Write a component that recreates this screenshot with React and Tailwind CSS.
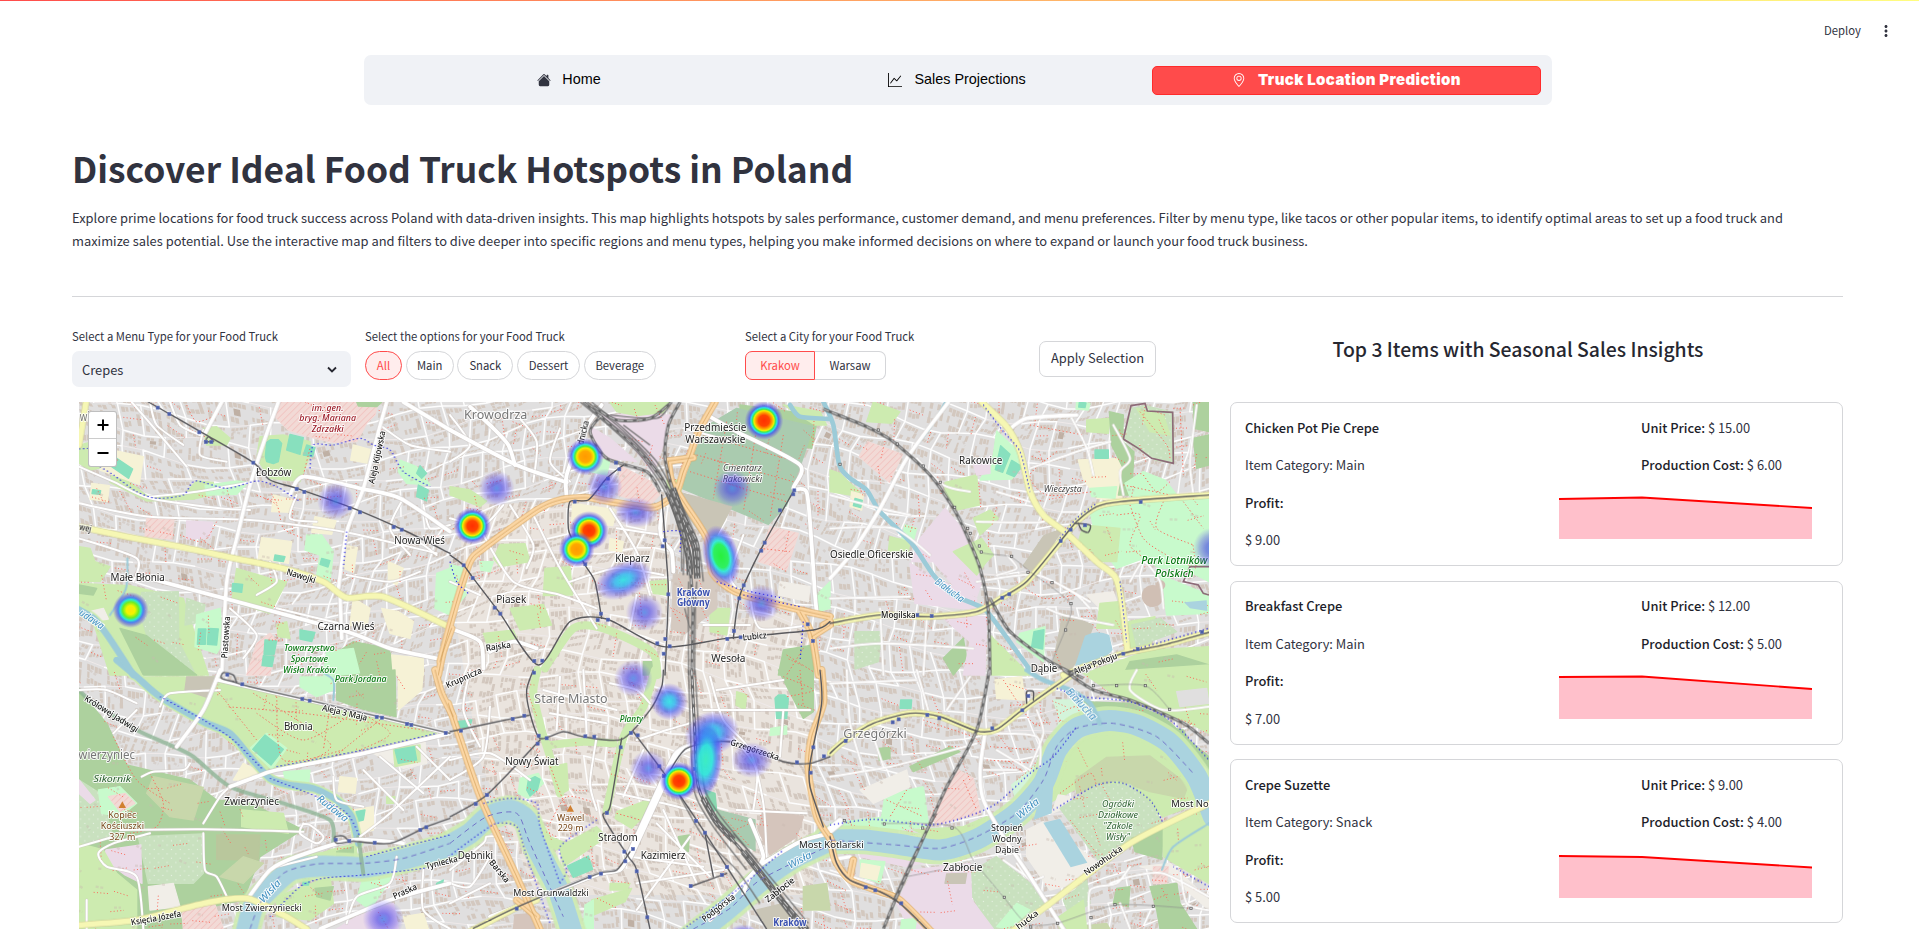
import React from "react";
import { BsHouseFill, BsGraphUp, BsGeoAlt } from "react-icons/bs";
import { MdMoreVert } from "react-icons/md";

/* ------------------------------------------------------------------ */
/* Map: drawn on a 3390 x 1581 canvas, split in six tiles (3 x 2)      */
/* ------------------------------------------------------------------ */

const OFFSET = { A: [0, 0], B: [1140, 0], C: [2280, 0], D: [0, 825], E: [1140, 825], F: [2280, 825] };

function curve(str) {
  const p = str.split(" ").map((s) => s.split(",").map(Number));
  let d = `M${p[0][0]} ${p[0][1]}`;
  for (let i = 0; i < p.length - 1; i++) {
    const a = p[Math.max(0, i - 1)];
    const b = p[i];
    const c = p[i + 1];
    const e = p[Math.min(p.length - 1, i + 2)];
    const k = 8;
    d += `C${b[0] + (c[0] - a[0]) / k} ${b[1] + (c[1] - a[1]) / k} ${c[0] - (e[0] - b[0]) / k} ${c[1] - (e[1] - b[1]) / k} ${c[0]} ${c[1]}`;
  }
  return d;
}

function Lines({ data, width, color, dash, cap = "round", opacity = 1 }) {
  return (
    <g fill="none" stroke={color} strokeWidth={width} strokeDasharray={dash} strokeLinecap={cap} strokeLinejoin="round" opacity={opacity}>
      {Object.entries(data).map(([tile, list]) => (
        <g key={tile} transform={`translate(${OFFSET[tile].join(" ")})`}>
          {list.map((s, i) => (
            <path key={i} d={curve(s)} />
          ))}
        </g>
      ))}
    </g>
  );
}

function rng(seed) {
  let s = seed;
  return () => {
    s = (s * 1664525 + 1013904223) % 4294967296;
    return s / 4294967296;
  };
}

function buildCity() {
  const r = rng(11);
  const S = 62;
  const node = (i, j) => {
    const x = i * S;
    const y = j * S;
    return [
      x + Math.sin(y / 330 + x / 900) * 75 + Math.sin(i * 12.9 + j * 7.7) * 13,
      y + Math.sin(x / 390 + y / 1100) * 95 + Math.cos(i * 5.3 + j * 9.1) * 13,
    ];
  };
  let streets = "";
  let lanes = "";
  let houses = "";
  let dark = "";
  let paths = "";
  let crumbs = "";
  for (let i = -3; i < 60; i++) {
    for (let j = -4; j < 30; j++) {
      const a = node(i, j);
      const b = node(i + 1, j);
      const c = node(i, j + 1);
      const f = (n) => n.toFixed(0);
      const seg = (p, q) => `M${f(p[0])} ${f(p[1])}L${f(q[0])} ${f(q[1])}`;
      if (r() < 0.68) streets += seg(a, b);
      else lanes += seg(a, b);
      if (r() < 0.6) streets += seg(a, c);
      const u = [(b[0] - a[0]) / S, (b[1] - a[1]) / S];
      const v = [(c[0] - a[0]) / S, (c[1] - a[1]) / S];
      const at = (x, y) => [a[0] + u[0] * x + v[0] * y, a[1] + u[1] * x + v[1] * y];
      const quad = (x, y, w, h) => {
        const q = [at(x, y), at(x + w, y), at(x + w, y + h), at(x, y + h)];
        return "M" + q.map((k) => `${k[0].toFixed(1)} ${k[1].toFixed(1)}`).join("L") + "Z";
      };
      for (let n = 0; n < 4; n++) {
        const w = 6 + r() * 14;
        if (r() < 0.85) houses += quad(7 + n * 12, 7, Math.min(w, 10), 8 + r() * 7);
        if (r() < 0.85) houses += quad(7 + n * 12, 42 - r() * 6, Math.min(w, 10), 12);
      }
      if (r() < 0.5) houses += quad(8, 24, 7, 14);
      if (r() < 0.5) houses += quad(44, 22, 9, 16);
      if (r() < 0.04) dark += quad(18, 20, 18, 14);
      if (r() < 0.26) paths += seg(at(8, 32), at(54, 30 + r() * 20));
      if (r() < 0.18) paths += seg(at(30, 6), at(32 + r() * 20, 56));
      if (r() < 0.35) crumbs += seg(at(10 + r() * 20, 20), at(40, 22 + r() * 10));
    }
  }
  return { streets, lanes, houses, dark, paths, crumbs };
}
const CITY = buildCity();

const PARK = "#c8facc";
const GRASS = "#cdebb0";
const WOOD = "#add19e";
const CEM = "#aacbaf";
const ALLOT = "#c9e1bf";
const PITCH = "#88e0be";
const IND = "#ebdbe8";
const SCHOOL = "#f6f2d6";
const PINK = "#f2dad6";
const SCRUB = "#c8d7ab";
const BROWN = "#c9c5b6";
const SAND = "#f1eee8";

const AREAS = {
  A: [
    [PINK, "620,21 925,21 915,60 890,85 860,140 790,142 735,130 655,105 610,60"],
    [GRASS, "27,150 70,140 110,215 60,225 27,205"],
    [GRASS, "130,225 235,305 340,300 380,258 430,262 425,300 370,312 230,318 120,262"],
    [PARK, "405,272 500,258 535,262 500,298 410,300"],
    [SCHOOL, "125,165 220,185 208,268 90,225"],
    [PITCH, "140,190 188,222 176,250 125,215"],
    [SCHOOL, "65,265 118,272 112,320 60,312"],
    [PITCH, "68,284 92,287 90,298 66,296"],
    [GRASS, "570,125 640,120 720,140 720,180 690,260 600,250 560,190"],
    [PITCH, "590,142 602,134 625,134 635,145 625,200 610,206 590,200 586,185"],
    [PITCH, "660,118 700,128 690,178 650,165"],
    [PITCH, "710,150 735,158 728,185 700,180"],
    [SCHOOL, "850,150 905,165 895,205 842,195"],
    [PARK, "990,195 1040,215 1080,270 1010,265 985,230"],
    [PITCH, "1050,212 1070,235 1055,250 1040,235"],
    [PITCH, "1045,270 1075,285 1070,318 1040,305"],
    [SCHOOL, "610,300 670,315 665,352 605,350"],
    [PINK, "230,370 312,375 305,432 225,425"],
    [IND, "350,378 428,382 420,428 350,432"],
    [SCHOOL, "575,428 665,440 655,505 565,490"],
    [PITCH, "615,480 645,485 640,500 612,496"],
    [SCHOOL, "735,365 798,378 785,418 725,412"],
    [SCHOOL, "830,452 862,458 850,532 820,520"],
    [SCHOOL, "955,500 1000,520 980,570 955,555"],
    [PARK, "710,420 755,420 790,470 780,560 740,540 750,480 705,465"],
    [PITCH, "755,490 780,497 774,516 750,508"],
    [GRASS, "500,520 600,550 650,560 600,655 485,620"],
    [PITCH, "488,565 518,568 515,592 486,588"],
    [GRASS, "27,455 60,460 75,500 120,515 90,560 27,560"],
    [GRASS, "27,565 180,572 340,610 415,840 120,840 60,650 27,640"],
    [ALLOT, "215,592 325,590 326,740 372,830 270,830 230,720 205,640"],
    [ALLOT, "350,610 405,630 395,680 345,690"],
    [WOOD, "150,700 230,722 380,840 220,840"],
    [WOOD, "27,570 80,580 70,600 27,595"],
    [SAND, "35,655 100,640 115,672 60,680"],
    [PARK, "380,660 450,640 460,740 440,775 375,755"],
    [PITCH, "385,702 408,702 406,748 382,748"],
    [PITCH, "415,700 445,702 440,750 412,748"],
    [PINK, "560,745 600,715 620,735 600,840 530,840"],
    [PITCH, "585,735 620,738 612,780 582,778"],
    [PITCH, "580,782 612,784 606,815 576,812"],
    [GRASS, "620,690 650,680 660,730 625,725"],
    [PITCH, "690,705 735,712 725,740 690,732"],
    [WOOD, "850,740 955,760 985,840 800,840 790,780"],
    [PARK, "770,770 850,760 870,840 760,840"],
    [SCHOOL, "850,610 900,640 890,700 840,690"],
    [SCHOOL, "935,640 985,650 1030,680 1020,730 960,715"],
    [SCHOOL, "965,780 1060,790 1060,840 970,840"],
    [PARK, "1100,535 1140,520 1140,660 1095,640"],
    [GRASS, "400,100 440,95 480,130 470,150 410,150"],
    [SCHOOL, "80,165 110,160 112,190 84,188"],
    [WOOD, "860,21 935,21 920,35 865,33"],
  ],
  B: [
    [IND, "440,60 662,60 640,150 610,235 560,170 500,100"],
    [GRASS, "480,21 660,21 640,52 560,62 500,50"],
    [IND, "420,95 480,130 560,200 480,190 440,150"],
    [PARK, "395,190 480,195 470,240 420,230"],
    [WOOD, "870,30 1105,60 1085,160 870,110"],
    [CEM, "775,90 860,40 1090,95 1050,215 1010,330 955,388 695,280 740,160"],
    [BROWN, "690,292 845,336 800,420 760,425 700,345"],
    [GRASS, "1000,30 1110,50 1130,90 1095,90"],
    [PINK, "510,212 600,258 628,300 600,330 505,300"],
    [SCHOOL, "368,325 500,345 488,392 365,378"],
    [GRASS, "0,275 60,285 110,318 90,335 0,300"],
    [GRASS, "150,448 225,446 240,500 150,515 130,490"],
    [GRASS, "285,520 360,515 368,600 280,602"],
    [GRASS, "180,640 280,628 305,690 210,705"],
    [PARK, "0,508 45,520 48,600 0,655"],
    [PARK, "90,500 130,500 120,530 92,525"],
    [GRASS, "600,560 650,555 648,600 610,595"],
    [GRASS, "740,600 780,610 770,650 742,640"],
    [PINK, "960,395 1045,415 1010,525 925,500"],
    [GRASS, "780,640 840,640 830,720 780,710"],
    [GRASS, "100,715 190,705 200,730 110,745"],
    [GRASS, "650,255 700,255 690,300 660,300"],
    [WOOD, "1000,765 1090,750 1090,840 985,840"],
    [PARK, "1100,600 1140,560 1140,640 1105,650"],
    [SCHOOL, "480,430 520,440 515,470 478,465"],
    [SCHOOL, "940,600 1000,610 990,640 938,632"],
    [SAND, "990,560 1080,575 1075,620 985,600"],
    [WOOD, "580,800 620,800 625,840 580,840"],
    ["#d5cac1", "670,540 800,530 800,640 700,720 665,700"],
  ],
  C: [
    [GRASS, "130,21 210,50 185,85 110,80"],
    [PARK, "740,21 780,25 775,45 738,42"],
    [PITCH, "748,22 768,24 765,38 746,36"],
    [PINK, "112,140 218,178 178,262 88,185"],
    [GRASS, "0,225 30,235 60,265 90,290 60,300 0,290"],
    [SCHOOL, "65,290 100,300 95,345 60,335"],
    [PITCH, "75,310 97,316 92,338 70,332"],
    [PARK, "500,108 560,165 575,215 545,252 450,255 490,180"],
    [PITCH, "512,152 540,178 518,232 496,224"],
    [PITCH, "545,196 575,214 553,245 530,235"],
    [GRASS, "345,262 440,240 448,330 380,345 345,300"],
    [IND, "345,340 395,400 455,560 440,605 375,578 310,500 245,500 270,430"],
    [IND, "240,505 310,545 440,610 440,645 255,625"],
    [GRASS, "430,370 480,345 505,370 450,420"],
    [IND, "430,205 480,185 480,235 440,240"],
    [GRASS, "180,425 240,440 235,470 175,470"],
    [PARK, "225,390 260,400 250,440 215,430"],
    [GRASS, "770,75 840,70 835,115 770,110"],
    [SCHOOL, "745,195 880,190 875,320 800,310 760,250"],
    [PITCH, "795,165 835,165 835,190 795,190"],
    [PARK, "780,280 860,275 855,310 785,305"],
    [WOOD, "838,50 880,60 878,140 912,170 905,300 865,300 880,220 845,150"],
    [ALLOT, "905,40 945,32 1028,52 1032,205 975,195 880,135"],
    [GRASS, "920,40 1000,60 1020,120 960,110"],
    [PARK, "885,265 940,230 1005,255 1040,300 900,305"],
    [WOOD, "1090,21 1137,21 1137,110 1092,100"],
    [WOOD, "1090,130 1137,120 1137,210 1100,220"],
    [PARK, "780,350 850,322 1137,305 1137,560 1060,520 990,520 940,490 860,520 800,440"],
    [GRASS, "760,390 870,400 860,500 810,500 745,440"],
    [PARK, "990,540 1137,600 1137,655 1010,660"],
    [BROWN, "642,422 700,400 612,532 580,512"],
    [SAND, "770,600 850,590 860,620 830,660"],
    [GRASS, "810,625 865,620 880,700 800,700"],
    [GRASS, "895,680 975,665 960,760 900,760"],
    [ALLOT, "905,690 990,670 1040,710 920,755"],
    [BROWN, "700,655 790,690 760,775 720,825 670,800"],
    [PARK, "570,715 645,695 640,800 560,740"],
    [PITCH, "612,710 642,704 638,762 605,755"],
    [ALLOT, "75,710 155,710 145,800 75,822"],
    [GRASS, "480,720 560,800 600,840 485,840"],
    [WOOD, "340,790 400,730 410,790 370,840"],
    [GRASS, "780,830 960,765 1137,755 1137,840 780,840"],
    [WOOD, "900,800 1040,780 1137,810 1137,840 880,840"],
    [IND, "330,660 470,665 465,840 400,840 420,740"],
    [GRASS, "370,470 455,430 490,480 470,500 440,540"],
  ],
  D: [
    [WOOD, "27,60 110,160 170,285 360,330 440,390 545,400 640,450 700,480 680,490 570,560 520,690 330,730 340,777 27,777"],
    [GRASS, "250,21 450,21 400,150 300,90 190,21"],
    [BROWN, "350,21 445,21 420,85 345,60"],
    [ALLOT, "27,330 90,370 130,500 27,530"],
    [SCRUB, "250,320 400,352 370,450 300,440 230,370"],
    [PARK, "85,360 150,350 200,400 150,440 95,430"],
    [PINK, "115,380 165,370 195,400 150,425"],
    [ALLOT, "205,500 398,492 400,610 370,640 235,640"],
    [IND, "108,540 212,525 216,640 165,615 98,565"],
    [GRASS, "27,520 100,540 140,610 200,660 200,777 27,777"],
    [SAND, "235,650 310,640 330,710 240,720"],
    [GRASS, "515,420 640,430 655,490 515,470"],
    ["#b9c79c", "440,495 570,495 565,570 440,568"],
    [SCRUB, "520,560 580,580 520,640 450,620"],
    [IND, "27,330 75,390 60,400 27,370"],
    [PINK, "335,710 430,690 460,777 340,777"],
    [GRASS, "445,35 780,112 1100,190 850,245 620,298 580,298 400,150"],
    [PARK, "590,190 650,235 605,298 540,235"],
    [PITCH, "585,195 640,238 603,285 548,238"],
    [SCHOOL, "490,330 520,280 570,305 540,330"],
    [PARK, "640,305 720,300 715,350 650,345"],
    [WOOD, "800,21 975,0 978,140 880,118 800,90"],
    [PARK, "690,21 800,21 790,60 740,80 690,50"],
    [SCHOOL, "985,0 1060,0 1055,60 985,120"],
    [SAND, "900,245 1065,215 1070,280 1000,295"],
    [GRASS, "970,235 1050,225 1050,275 975,290"],
    [PITCH, "975,240 1033,230 1040,270 985,280"],
    [SCHOOL, "810,320 860,325 855,370 805,365"],
    [SCHOOL, "850,420 910,410 910,480 870,490"],
    [PITCH, "858,425 885,420 880,450 860,455"],
    [GRASS, "950,380 975,380 970,400 950,400"],
    [GRASS, "780,540 860,520 860,570 700,570"],
    [WOOD, "800,545 850,530 850,560 800,565"],
    [GRASS, "620,680 780,620 790,700 720,750 620,740"],
    [PARK, "880,620 950,590 980,600 900,720 860,690"],
    [PITCH, "700,625 720,625 715,645 698,645"],
    [WOOD, "735,655 790,650 780,690 740,680"],
    [IND, "860,740 970,700 985,777 800,777"],
    [SCHOOL, "1000,740 1060,730 1075,777 1010,777"],
    [PITCH, "1100,640 1120,630 1115,650 1098,658"],
  ],
  E: [
    [WOOD, "985,0 1090,0 1090,125 1060,145"],
    [GRASS, "860,65 890,75 885,120 858,105"],
    [PARK, "962,175 1010,168 1010,192 960,196"],
    [PITCH, "975,85 985,75 1005,75 1015,85 1010,145 980,145"],
    [PARK, "210,325 265,310 280,340 235,385 205,370"],
    [PITCH, "235,330 255,320 270,328 262,360 240,378 230,360"],
    [GRASS, "305,290 350,280 355,360 330,375"],
    [GRASS, "500,425 605,385 590,430 545,475 495,445"],
    [GRASS, "330,530 440,470 470,500 340,590"],
    [GRASS, "265,440 300,500 350,520 320,540 285,520"],
    [PITCH, "352,588 415,558 428,598 370,622"],
    [GRASS, "425,690 545,655 525,695 420,740"],
    [GRASS, "480,640 540,640 530,660 480,660"],
    [PARK, "405,705 430,690 430,777 400,777"],
    [WOOD, "685,500 718,495 715,545 690,540"],
    ["#a9cbb0", "800,420 915,450 915,542 850,505 800,450"],
    ["#88d8b0", "765,360 795,370 800,420 780,430"],
    ["#d5c5bc", "940,415 1060,440 1040,500 960,555 925,480"],
    [ALLOT, "880,640 930,640 860,700 830,700"],
    [BROWN, "920,720 1000,700 1060,777 950,777"],
    ["#d5c5bc", "195,735 250,730 260,777 190,777"],
    [GRASS, "1040,550 1130,520 1140,540 1050,580"],
    [PITCH, "20,155 65,150 60,170 18,175"],
    [PARK, "170,420 200,420 190,440 170,440"],
    [SCRUB, "1060,650 1130,640 1140,720 1060,720"],
  ],
  F: [
    [PITCH, "212,90 245,90 243,115 210,115"],
    [PITCH, "530,35 555,30 553,48 528,50"],
    [SCHOOL, "495,30 575,20 585,90 500,85"],
    [PINK, "385,300 430,325 452,430 320,465 300,440"],
    [PARK, "165,375 280,350 295,460 155,440"],
    [WOOD, "145,235 180,232 180,265 148,272"],
    [WOOD, "240,290 360,230 390,245 250,305"],
    [SAND, "90,360 230,300 240,350 130,400"],
    [PARK, "0,460 170,440 290,470 200,480 0,490"],
    [GRASS, "250,480 400,470 470,440 450,490 330,515"],
    ["#d4f4da", "545,345 650,255 690,150 670,90 760,90 790,145 720,200 660,310 560,400"],
    [GRASS, "760,10 1137,-15 1137,190 1060,150 870,85"],
    [WOOD, "760,95 900,100 1000,140 1100,230 1137,260 1137,300 1030,190 900,130 820,130"],
    [WOOD, "1000,170 1060,180 1090,240 1040,230"],
    ["#e0dfdf", "1040,65 1130,55 1137,100 1050,110"],
    [GRASS, "665,395 690,270 770,200 860,178 960,200 1040,250 1095,350 1105,400 1000,440 860,340 760,345"],
    [SCRUB, "735,330 830,262 960,258 1075,345 1060,385 960,365 860,330 740,370"],
    [SAND, "665,430 685,375 720,380 715,410"],
    [ALLOT, "690,415 800,345 900,343 965,405 995,455 805,570"],
    [SAND, "590,480 640,455 800,575 740,640 660,660 590,560"],
    [WOOD, "905,505 1000,472 995,568 915,545"],
    [GRASS, "1000,470 1137,410 1137,640 1050,590 1000,560"],
    [SAND, "930,590 1020,580 1137,690 1137,720 1010,610"],
    [ALLOT, "425,605 500,560 600,640 645,705 570,777 480,777 428,680"],
    [PARK, "500,770 560,700 600,720 540,777"],
    [ALLOT, "700,690 770,630 780,700 720,740"],
    [IND, "250,600 420,580 425,690 490,777 240,777 200,700"],
    [IND, "90,535 240,545 330,565 230,590 90,560"],
    [BROWN, "350,612 410,610 405,640 345,640"],
    [PARK, "90,570 165,575 150,640 95,620"],
    [SCHOOL, "95,580 150,590 140,630 90,620"],
    [PARK, "215,750 260,745 255,777 212,777"],
    [WOOD, "860,655 900,650 895,710 850,700"],
    [WOOD, "960,650 1040,640 1050,700 1100,777 990,777 980,720"],
    [PINK, "970,590 1015,590 1010,640 970,640"],
    [SCRUB, "745,770 830,760 840,777 745,777"],
    [GRASS, "680,745 760,690 770,777 690,777"],
  ],
};

const WATER = {
  wide: {
    D: ["525,800 550,710 605,650 665,600 760,588 880,592 1000,568 1150,525"],
    E: ["-10,530 60,490 115,440 180,420 230,450 255,520 290,590 325,660 370,800", "710,815 830,720 930,635 1030,565 1150,508"],
    F: ["-10,510 100,510 200,522 330,540 440,508 560,430 640,340 680,240 740,175 830,152 920,165 1020,220 1100,320 1150,440"],
  },
  mid: { D: ["140,-30 200,20 270,80 400,155 480,190 540,260 600,325 660,345 730,355 800,390 845,440 865,520"], A: ["20,640 70,670 115,725 190,840"] },
  slim: {
    C: ["-20,20 10,90 28,210 60,250 110,285 150,350 245,445 310,540 370,600 460,640 510,700 600,825"],
    F: ["590,0 640,30 720,60 780,100 810,160"],
    B: ["1020,30 1050,65 1140,72"],
  },
  thin: { A: ["172,490 168,580 120,660"], C: ["345,21 300,100 230,190 190,260"], F: ["995,600 1030,530 1137,460"], D: ["745,0 790,30 790,90"] },
};

const LOCAL = {
  A: ["27,215 130,260 240,310 450,340 540,345", "240,305 380,290 540,262", "27,325 240,365 540,375 820,410 1100,475", "185,21 270,120 350,215", "27,430 200,490 190,560", "400,105 390,180 470,200", "300,21 330,90 390,120", "680,300 660,370 740,380", "600,500 620,560 560,600", "830,540 960,560 1050,530", "1000,310 960,400 1020,480", "930,90 1020,150 1140,170", "960,460 1040,440 1100,480", "480,640 560,720 520,790", "620,640 830,690", "240,21 260,90 340,150", "1060,330 1080,400 1140,390"],
  B: ["0,60 60,150 0,200", "0,370 100,390 160,330", "100,420 190,560 330,600 440,640", "250,360 330,520 440,700", "480,340 560,470 600,600", "360,560 500,520 640,540", "500,400 640,420", "180,330 250,450 230,520", "560,600 540,700", "660,560 650,700", "880,420 840,540 860,580", "700,100 850,140", "900,600 930,700 1080,690", "760,690 900,690", "90,600 0,560", "330,100 300,200 360,260", "200,60 260,140 250,260"],
  C: ["0,300 130,335 240,360", "260,190 340,270 420,290", "440,380 640,380 630,330", "600,220 740,170 840,140", "500,290 600,320", "720,60 770,160 790,240", "0,400 190,400 300,480", "0,610 240,605", "440,560 620,540 780,620", "880,300 870,230 900,190 850,90", "900,560 940,500 990,560 1000,640", "780,640 740,600 690,570", "650,640 700,660 850,690", "1100,30 1080,200 1090,300", "530,480 560,520 500,540", "150,640 160,840", "290,670 280,840", "0,760 160,745 430,760"],
  D: ["150,480 400,478 700,485", "130,500 27,530", "400,490 405,600 440,620 475,690", "240,490 130,520 85,550 110,590 200,620 220,777", "360,280 340,300 250,305 215,320", "450,60 300,70 270,110", "200,120 130,190", "700,460 690,490 740,520 760,500 720,465 700,462", "480,350 450,380 400,460", "790,320 800,390 880,410", "870,500 960,430 1140,260", "880,300 1000,420", "930,260 1060,370", "1040,230 1140,330", "980,560 960,640 860,680 830,760", "1060,600 1060,720 1140,777", "740,560 620,590", "50,690 50,777", "27,60 110,60 200,100"],
  E: ["0,270 120,250 240,330", "60,0 40,120 90,230", "120,110 100,260 0,330", "280,60 500,120", "300,130 470,160", "330,20 320,180", "400,0 410,190", "480,40 560,60 600,100", "440,200 420,340 440,420", "560,210 650,180 720,160", "500,370 640,400 760,430", "580,240 520,380", "620,460 780,620", "540,560 760,590", "560,640 820,600", "720,500 560,720", "640,420 740,640", "780,20 820,150 900,240 940,400 950,560", "850,200 920,300 910,420", "760,120 1080,120", "800,60 1000,30", "0,600 100,520 110,500 160,500", "120,560 60,650 0,640", "0,700 120,640", "1000,120 990,260", "860,420 1070,430"],
  F: ["50,0 60,160 100,300", "0,320 180,290 330,250 440,220", "260,0 300,140", "120,170 160,290", "480,190 620,200 630,290", "500,240 600,300", "460,300 560,300", "620,120 640,190 600,290", "0,600 130,640", "900,590 860,640 780,660 780,777", "840,640 900,620 1000,610 1137,680", "560,580 600,630 640,620", "520,570 590,620", "920,0 900,60 1000,120 1137,110", "870,700 900,777", "1050,600 1070,700 1137,720", "420,20 350,120", "0,40 260,30"],
};

const WHITE = {
  A: ["455,21 405,115", "625,21 585,130 540,270 500,430 470,560 455,840", "950,21 925,110 880,280 830,410 805,580", "660,300 700,245 870,280 990,310 1140,410", "1000,21 1140,105", "200,540 500,620 830,710 960,760 1100,790", "810,600 815,730"],
  B: ["0,105 200,210 350,262", "60,35 130,100 175,150 195,210", "455,30 400,110 350,240 350,310", "780,65 860,110 1050,210 1030,280 1070,292 1085,450 1095,600 1100,650", "640,330 630,400 640,440 665,470 670,530", "0,700 90,740 100,820", "120,770 190,740 260,760"],
  C: ["355,21 230,190 150,340 60,480 0,550", "740,60 590,70 530,110"],
  D: ["450,0 400,120 320,230", "480,350 560,320 620,300 880,250 1140,190", "445,30 780,105 1140,190", "530,690 600,600 680,560 850,510 1000,520", "750,777 960,690 1140,640"],
  E: ["120,740 250,690 440,615 510,600 540,550", "930,585 1050,515 1140,490", "780,750 870,650 930,590", "900,450 940,560 900,620 880,670"],
  F: ["465,190 450,300 460,390 520,500 600,620 700,777", "60,560 0,570"],
};
const WHITE_BIG = { E: ["535,565 620,380 680,255 725,230"], F: ["0,480 30,455"], A: [], B: [] };

const YELLOW = {
  A: ["27,395 170,425 330,455 480,487 640,520 760,560 830,608 940,605 1130,692", "48,21 27,150"],
  C: ["455,21 530,95 570,170 600,290 640,360 710,415 800,500 855,545 875,620 892,765", "0,685 150,660 300,665 440,650 520,605 590,560 690,440 740,380 800,335 870,320 1137,300", "700,840 880,775 1000,750 1137,712"],
  D: ["27,765 200,750 400,700 530,685 640,735 710,777"],
  E: ["60,785 200,712 260,690"],
  F: ["0,250 40,215 130,160 240,130 330,140 440,183 500,178 570,125 660,60 760,-10", "545,785 660,700 900,520 1137,400"],
};
const ORANGE = {
  A: ["1145,700 1120,770 1105,840"],
  B: ["-30,800 20,620 60,500 100,460 260,345 330,315 410,308 480,320 600,338 640,325 680,290 700,230 720,180 745,110 795,21", "655,200 665,260 700,320 770,430 785,530 830,575 880,600 1050,645 1140,665", "655,198 730,188", "1050,650 1085,720 1105,840", "1140,690 1085,725"],
  C: ["0,680 -20,690"],
  D: ["1095,0 1115,70 1150,140"],
  E: ["-5,100 90,380 200,620 275,790", "1115,0 1120,100 1085,200 1075,300 1100,440 1150,520", "200,690 260,740"],
  F: ["0,500 15,570 60,630 150,665 210,690 305,785", "70,570 60,620"],
};

const RAIL = {
  B: ["400,21 470,80 560,160 640,260 690,380 715,480 728,640 725,840", "430,35 500,75 600,70 665,21", "690,21 655,90 645,190 680,320 740,440 745,520", "455,60 420,110 470,190 590,230 630,290"],
  C: ["-20,42 0,50 110,95 190,140 300,240 370,340 410,420 450,520 475,650 480,840", "480,610 540,710 660,800 760,850"],
  E: ["725,0 735,200 745,350 790,440 900,570 970,660 1075,777"],
  F: ["478,0 440,180 350,350 300,460 200,680 160,777", "700,0 790,60 900,90 1060,160 1137,220"],
};
const RAIL_WIDE = {
  B: ["655,290 685,370 715,480 720,540", "668,280 705,380 735,460 742,550"],
  E: ["760,385 800,455 850,510", "880,545 900,570 970,660 1060,777"],
};
const RAIL_THIN = {
  B: ["412,21 500,90 600,190 660,290 700,400 700,540", "390,21 480,95 570,180 640,280 690,400 695,530", "425,21 520,100 620,200 680,310 725,420 730,520", "640,260 700,340 745,450 760,560", "716,560 715,640 716,840", "740,560 736,640 734,840", "704,640 722,700 735,640", "450,60 560,150 650,270", "520,90 600,150", "480,60 620,70 660,30"],
  E: ["716,0 722,200 735,370 790,470 890,600", "735,0 748,200 765,360 820,450 920,570", "850,490 960,620 1075,760", "690,380 760,500 860,600 930,700"],
  F: ["320,430 250,560 190,690"],
};

const TRAM = {
  A: ["235,21 400,115 550,203 600,255 680,280 850,340 1000,405 1140,475", "405,140 415,125 430,140 405,140"],
  B: ["520,210 470,250 415,315 360,320 355,400 370,440 405,510 435,560 455,670", "635,300 650,500 655,600 645,840", "0,480 40,510 70,550 150,655 265,810 360,680 470,672 640,755 830,730 1090,705 1140,680", "850,730 870,600 945,440 1030,290"],
  C: ["0,685 150,660 300,665 440,650 520,605 590,560 690,440 740,380 800,335 870,320 1137,300", "735,385 780,390 775,412 755,405 745,385", "720,830 880,775 1000,750 1137,712"],
  D: ["490,35 540,50 780,105 1140,190", "490,35 455,25 460,8 490,15 500,38", "850,513 960,520 1070,470 1140,445", "850,513 800,520 795,500 820,498 835,512"],
  E: ["250,0 230,60 240,130 270,205 340,185 400,200 515,208 600,120 635,50 640,0", "270,210 110,375 0,440", "515,205 480,410 460,440 535,560 560,600 600,777", "550,185 650,320 740,450 830,590 950,777", "0,185 190,145 240,135", "650,320 710,235 840,215 1000,275 1080,280 1140,260", "70,775 200,712 440,612 500,600 540,545", "1110,0 1115,100 1080,280 1080,350 1120,470", "765,490 790,620", "720,650 830,610"],
  F: ["0,250 40,215 130,160 240,130 330,140 440,183 500,178 570,125 660,60 760,-10", "590,100 590,65 610,65 610,90", "0,500 20,580 60,630 150,665 210,700 290,777"],
};
const WIRES = {
  C: ["330,262 410,400 450,470 540,485 600,530 720,625 705,705 660,810"],
  F: ["155,460 370,470 430,570 520,680 590,760 680,760 860,705 1080,715", "790,47 945,47 1020,120", "230,620 330,600"],
};
const TUNNEL = { D: ["27,60 60,90 200,180 300,225 370,260 480,350 640,400 780,450 790,520", "865,500 880,612"] };

const BLUE_DOTS = {
  A: ["90,215 130,240 200,290 260,310 340,300 375,258 470,280 560,258 620,275 690,320", "27,162 60,160", "720,220 730,150 790,150 870,130 910,150 960,165 1000,230 1080,275", "830,410 820,520"],
  B: ["640,410 690,410 690,470", "880,600 1050,635", "800,560 880,585 1000,610", "1060,680 1050,800", "0,500 20,560 60,600"],
  C: ["460,30 520,110 570,170 600,290", "690,430 740,370 800,325", "870,560 890,740", "910,765 1137,700"],
  D: ["270,80 400,150 490,210 580,300", "620,290 880,240 1100,190", "600,325 740,380 830,430 870,500", "600,740 690,650 760,625 880,615 1060,595 1140,570", "890,560 1000,530 1140,495"],
  E: ["100,400 180,385 260,400 270,470 330,640", "-5,560 90,490 140,460 200,470 230,560 300,760", "330,640 350,600 330,530 440,450", "700,777 860,660 1000,540"],
  F: ["0,465 130,448 300,465 410,440 500,400 600,310 670,260 740,170", "670,420 800,345 880,340 960,390 1000,460", "680,55 760,80 900,95 1020,150 1137,270", "1137,650 1030,590"],
};
const NAVY_DASH = {
  D: ["540,777 570,700 640,610 740,582 880,580 1000,565 1140,520"],
  E: ["0,520 110,440 200,430 240,520 340,740", "730,777 840,715 930,630 1130,530"],
  F: ["0,510 200,525 330,535 440,500 560,430 640,330 680,230 740,175 850,160 980,200 1090,310"],
};
const PATHS = {
  A: ["350,30 380,80 440,60", "700,240 720,160", "560,300 620,330 640,400 700,430", "440,380 400,440 330,420"],
  D: ["440,60 560,210", "550,70 780,220 700,280", "620,80 640,270 820,240", "780,110 760,240", "850,130 700,210 560,130", "930,150 780,270", "1060,180 700,130 470,110", "240,310 280,400 260,470 180,490", "130,200 200,330 300,400", "860,120 960,190 870,240"],
  C: ["900,330 940,430 1010,480 1100,520", "1000,320 980,400 1090,450", "1060,320 1120,400", "860,360 930,360 900,450 960,500", "600,90 760,120", "680,170 600,240 650,300 790,290", "930,50 1010,150 1020,190", "1050,40 1060,240", "940,240 980,290 1020,260", "560,560 640,610 740,600", "880,270 1020,300"],
  B: ["760,120 1040,200", "740,180 1030,260", "720,230 1010,320", "830,80 790,310", "920,100 880,350", "1000,120 960,370", "930,460 1020,470", "1010,780 1090,830", "1060,760 1010,840", "650,620 690,680"],
  E: ["1000,20 1090,60 1010,80", "1050,0 1060,110", "120,380 260,410", "290,260 350,420", "500,430 570,450", "300,460 350,380 440,400", "820,440 900,530", "810,500 900,460"],
  F: ["520,30 600,150 640,170", "480,230 620,240", "470,270 620,280", "280,150 430,200", "690,130 740,110 750,160 690,150 680,110", "170,390 280,440", "230,360 180,440", "400,330 440,420", "690,370 780,310 800,350", "720,450 800,550", "560,330 650,260"],
};

const STOPS = {
  A: [[263, 38], [298, 57], [388, 112], [408, 141], [424, 141], [550, 203], [680, 282], [703, 291], [839, 340], [870, 352], [971, 396], [995, 404]],
  B: [[498, 203], [508, 223], [474, 251], [374, 320], [406, 508], [453, 656], [443, 675], [474, 674], [622, 745], [659, 754], [644, 436], [638, 454], [655, 598], [641, 776], [646, 732], [832, 732], [872, 727], [852, 708], [868, 610], [881, 571], [934, 467], [944, 443], [990, 346], [1033, 286], [1030, 298], [41, 511], [68, 549], [134, 638], [151, 656], [253, 798], [277, 797], [1073, 688], [1089, 738]],
  C: [[262, 660], [305, 663], [517, 608], [538, 598], [692, 438], [722, 404], [765, 391], [932, 321], [880, 776], [923, 762], [1116, 711]],
  D: [[472, 14], [517, 43], [697, 87], [719, 92], [920, 141], [936, 143], [1011, 162], [1024, 165], [1127, 189], [797, 509], [838, 513], [914, 518], [1051, 480], [1069, 472]],
  E: [[252, 8], [188, 147], [223, 137], [33, 182], [266, 197], [263, 221], [290, 205], [406, 199], [433, 200], [543, 189], [563, 196], [512, 232], [111, 375], [77, 402], [471, 429], [523, 545], [549, 537], [526, 574], [560, 604], [453, 611], [419, 621], [592, 742], [200, 716], [722, 648], [816, 615], [738, 453], [765, 488], [831, 591], [628, 289], [642, 318], [762, 220], [735, 297], [1041, 277], [1090, 232], [1122, 259], [1082, 308]],
  F: [[47, 213], [188, 157], [206, 148], [292, 135], [328, 145], [487, 175], [577, 121], [595, 78], [107, 652], [136, 661], [214, 700]],
};
const NODES = {
  C: [[30, 208], [145, 105], [202, 147], [280, 213], [331, 262], [374, 337], [413, 400], [421, 415], [448, 453], [454, 471], [545, 484], [594, 532], [666, 563], [723, 626], [707, 705]],
  F: [[43, 452], [163, 462], [278, 474], [366, 474], [523, 682], [602, 771], [683, 760], [783, 743], [855, 704], [970, 709], [1083, 715], [790, 47], [860, 47], [946, 47], [1019, 118]],
};

/* text, centre x, baseline y, width, size, rotation, kind */
const LABELS = {
  A: [
    ["im. gen.", 773, 47, 95, 28, 0, "red"], ["bryg. Mariana", 773, 79, 170, 28, 0, "red"], ["Zdrzałki", 773, 111, 96, 28, 0, "red"],
    ["Łobzów", 611, 244, 106, 30, 0, "town"], ["Nowa Wieś", 1049, 447, 152, 30, 0, "town"], ["Małe Błonia", 203, 559, 163, 30, 0, "town"],
    ["Czarna Wieś", 828, 706, 171, 30, 0, "town"], ["Nawojki", 693, 552, 90, 27, 17, "road"], ["wej", 46, 408, 36, 27, 12, "road"],
    ["Aleja Kijowska", 922, 195, 162, 26, -78, "road"], ["Piastowska", 468, 735, 126, 26, -86, "road"],
    ["Towarzystwo", 718, 768, 152, 27, 0, "green"], ["Sportowe", 718, 801, 112, 27, 0, "green"], ["Wisła Kraków", 718, 834, 158, 27, 0, "green"],
    ["udawa", 64, 682, 82, 30, 34, "water"], ["wi", 44, 79, 30, 36, 0, "city"],
  ],
  B: [
    ["Krowodrza", 137, 72, 190, 36, 0, "city"], ["Przedmieście", 796, 107, 186, 30, 0, "town"], ["Warszawskie", 796, 145, 180, 30, 0, "town"],
    ["Cmentarz", 877, 229, 116, 27, 0, "grey"], ["Rakowicki", 877, 261, 118, 27, 0, "grey"], ["Kleparz", 547, 500, 103, 30, 0, "town"],
    ["Piasek", 184, 624, 90, 30, 0, "town"], ["Rajska", 145, 763, 76, 26, -8, "road"], ["Wesoła", 835, 800, 102, 30, 0, "town"],
    ["Lubicz", 914, 733, 72, 26, -6, "road"], ["Kraków", 730, 602, 100, 29, 0, "station"], ["Główny", 730, 634, 98, 29, 0, "station"],
    ["Prądnicka", 396, 140, 112, 26, -76, "road"],
  ],
  C: [
    ["Rakowice", 452, 208, 130, 30, 0, "town"], ["Osiedle Oficerskie", 125, 489, 250, 30, 0, "town"], ["Wieczysta", 698, 291, 114, 27, 0, "grey"],
    ["Białucha", 358, 595, 100, 30, 36, "water"], ["Mogilska", 205, 668, 104, 26, 0, "road"], ["Dąbie", 642, 832, 80, 30, 0, "town"],
    ["Aleja Pokoju", 796, 815, 138, 26, -21, "road"], ["Park Lotników", 1033, 508, 198, 31, 0, "green"], ["Polskich", 1033, 545, 116, 31, 0, "green"],
  ],
  D: [
    ["Park Jordana", 872, 35, 156, 26, 0, "green"], ["Aleja 3 Maja", 824, 137, 138, 26, 13, "road"], ["Błonia", 685, 181, 86, 30, 0, "town"],
    ["Królowej Jadwigi", 124, 140, 185, 26, 32, "road"], ["wierzyniec", 110, 268, 170, 36, 0, "city"], ["Sikornik", 127, 337, 113, 28, 0, "wood"],
    ["Zwierzyniec", 545, 406, 164, 30, 0, "town"], ["Kopiec", 157, 445, 84, 27, 0, "peak"], ["Kościuszki", 157, 477, 130, 27, 0, "peak"], ["327 m", 157, 509, 78, 27, 0, "peak"],
    ["Rudawa", 787, 425, 110, 30, 38, "water"], ["Wisła", 601, 673, 82, 30, -48, "water"], ["Most Zwierzyniecki", 575, 722, 240, 27, 0, "town"],
    ["Księcia Józefa", 258, 753, 152, 26, -10, "road"], ["Praska", 1005, 673, 76, 26, -24, "road"], ["Tyniecka", 1115, 586, 98, 26, -14, "road"],
  ],
  E: [
    ["Krupnicza", 42, 32, 115, 26, -24, "road"], ["Stare Miasto", 363, 100, 220, 36, 0, "city"], ["Planty", 544, 157, 70, 26, 0, "green"],
    ["Nowy Świat", 246, 286, 160, 30, 0, "town"], ["Wawel", 362, 452, 82, 27, 0, "peak"], ["229 m", 362, 483, 78, 27, 0, "peak"],
    ["Stradom", 504, 512, 118, 30, 0, "town"], ["Kazimierz", 639, 566, 134, 30, 0, "town"], ["Dębniki", 76, 566, 106, 30, 0, "town"],
    ["Most Grunwaldzki", 303, 677, 226, 27, 0, "town"], ["Barska", 148, 612, 80, 26, 50, "road"], ["Grzegórzecka", 914, 248, 152, 26, 18, "road"],
    ["Podgórska", 806, 722, 118, 26, -38, "road"], ["Wisła", 1050, 580, 74, 30, -28, "water"], ["Most Kotlarski", 1144, 535, 194, 28, 0, "town"],
    ["Zabłocie", 990, 668, 104, 26, -38, "road"], ["Kraków", 1020, 769, 100, 29, 0, "station"],
  ],
  F: [
    ["Grzegórzki", 135, 205, 190, 36, 0, "city"], ["Białucha", 752, 112, 118, 30, 47, "water"], ["Wisła", 594, 425, 78, 30, -40, "water"],
    ["Stopień", 531, 483, 96, 28, 0, "town"], ["Wodny", 531, 516, 88, 28, 0, "town"], ["Dąbie", 531, 549, 72, 28, 0, "town"],
    ["Zabłocie", 398, 604, 118, 30, 0, "town"], ["Ogródki", 864, 411, 96, 27, 0, "wood"], ["Działkowe", 864, 444, 120, 27, 0, "wood"],
    ["\"Zakole", 864, 476, 88, 27, 0, "wood"], ["Wisły\"", 864, 509, 72, 27, 0, "wood"], ["Nowohucka", 820, 580, 134, 26, -35, "road"],
    ["hucka", 592, 758, 76, 26, -37, "road"], ["Most No", 1080, 411, 112, 28, 0, "town"],
  ],
};
const KIND = {
  town: ["#222222", "normal", 400], road: ["#111111", "normal", 500], city: ["#777777", "normal", 400], green: ["#0a7a14", "italic", 500],
  red: ["#9c1c28", "italic", 500], grey: ["#444444", "italic", 400], wood: ["#2c6130", "italic", 400], water: ["#3f8fc0", "italic", 400],
  station: ["#3a50b0", "normal", 700], peak: ["#7a4a1c", "normal", 400],
};

function Labels() {
  return (
    <g fontFamily="'Noto Sans', sans-serif" textAnchor="middle" stroke="#ffffff" strokeOpacity="0.85" strokeWidth="6" strokeLinejoin="round" style={{ paintOrder: "stroke" }}>
      {Object.entries(LABELS).map(([tile, list]) =>
        list.map(([t, x, y, w, size, rot, kind], i) => {
          const X = x + OFFSET[tile][0];
          const Y = y + OFFSET[tile][1];
          const [fill, fontStyle, weight] = KIND[kind];
          return (
            <text key={tile + i} x={X} y={Y} fontSize={size} textLength={w} lengthAdjust="spacingAndGlyphs" fill={fill} fontStyle={fontStyle} fontWeight={weight} transform={rot ? `rotate(${rot} ${X} ${Y - 8})` : undefined}>
              {t}
            </text>
          );
        })
      )}
    </g>
  );
}

/* kind, x, y, rx, ry, rotation */
const HEAT = [
  ["cool", 797, 318, 56, 56, 0], ["yellow", 182, 645, 54, 54, 0], ["cool", 1280, 280, 54, 54, 0], ["cool", 1603, 275, 54, 54, 0],
  ["cool", 1697, 352, 66, 46, 5], ["cool", 1987, 280, 58, 56, 0], ["cool", 1723, 652, 56, 56, 0], ["cool", 2075, 625, 56, 56, 0],
  ["cyan", 1660, 555, 90, 54, -22], ["green", 1953, 483, 54, 94, -14], ["orange", 1546, 185, 56, 56, 0], ["red", 2082, 77, 58, 58, 0],
  ["red", 1207, 393, 56, 56, 0], ["red", 1557, 407, 59, 59, 0], ["orange", 1520, 463, 54, 54, 0],
  ["cool", 1690, 850, 58, 56, 0], ["cyan", 1798, 920, 56, 56, 0], ["cyan", 1925, 1015, 84, 66, -18], ["green2", 1907, 1095, 50, 112, 4],
  ["cool", 2045, 1095, 62, 54, 0], ["cool", 1735, 1120, 56, 54, 0], ["red", 1827, 1158, 58, 58, 0],
  ["cool", 940, 1572, 62, 60, 0], ["cool", 3425, 460, 56, 62, 0], ["cool", 2020, 1618, 46, 30, 0],
];
const RAMP = {
  cool: [[0, "#3b78ea", 0.75], [0.3, "#403ce8", 0.6], [0.65, "#4a3af0", 0.34], [1, "#6a50ff", 0]],
  cyan: [[0, "#34e0e4", 0.95], [0.3, "#36b8ee", 0.88], [0.55, "#3a5cf0", 0.65], [0.8, "#5040f0", 0.3], [1, "#6a50ff", 0]],
  green: [[0, "#28f03c", 1], [0.38, "#30f060", 1], [0.5, "#30e8d8", 0.95], [0.68, "#3a70f4", 0.75], [0.85, "#5040f0", 0.35], [1, "#6a50ff", 0]],
  green2: [[0, "#36ecc0", 0.97], [0.4, "#30e4dc", 0.95], [0.65, "#3880f4", 0.75], [0.85, "#4440f0", 0.4], [1, "#6a50ff", 0]],
  yellow: [[0, "#ffe40a", 1], [0.24, "#f2f400", 1], [0.44, "#70ee20", 1], [0.58, "#2ce8d0", 1], [0.7, "#3a70f8", 0.85], [0.84, "#5040e0", 0.45], [1, "#6a50ff", 0]],
  orange: [[0, "#ff9a00", 1], [0.3, "#ffa800", 1], [0.46, "#f4ee00", 1], [0.56, "#50ee40", 1], [0.65, "#2ce0e8", 1], [0.75, "#3a58f0", 0.75], [0.87, "#5040e0", 0.35], [1, "#6a50ff", 0]],
  red: [[0, "#ff3000", 1], [0.28, "#ff4400", 1], [0.42, "#ffa000", 1], [0.52, "#f0f000", 1], [0.59, "#40ee50", 1], [0.67, "#2cdcec", 1], [0.76, "#3a50f0", 0.75], [0.88, "#5040e0", 0.35], [1, "#6a50ff", 0]],
};

function Marks({ data, size, fill, stroke }) {
  return (
    <g fill={fill} stroke={stroke} strokeWidth="2">
      {Object.entries(data).map(([tile, list]) =>
        list.map(([x, y], i) => <rect key={tile + i} x={x + OFFSET[tile][0] - size / 2} y={y + OFFSET[tile][1] - size / 2} width={size} height={size} />)
      )}
    </g>
  );
}

function CityMap() {
  return (
    <svg viewBox="27 21 3390 1581" className="block h-[527px] w-[1130px]">
      <defs>
        {Object.entries(RAMP).map(([id, stops]) => (
          <radialGradient key={id} id={id}>
            {stops.map(([o, c, a], i) => (
              <stop key={i} offset={o} stopColor={c} stopOpacity={a} />
            ))}
          </radialGradient>
        ))}
        <pattern id="trees" width="26" height="26" patternUnits="userSpaceOnUse">
          <rect x="4" y="4" width="3" height="3" fill="#ffffff" opacity="0.7" />
          <rect x="17" y="17" width="3" height="3" fill="#ffffff" opacity="0.7" />
        </pattern>
        <pattern id="hatch" width="14" height="14" patternUnits="userSpaceOnUse" patternTransform="rotate(45)">
          <rect width="3" height="14" fill="#f0b8b4" opacity="0.6" />
        </pattern>
      </defs>
      <rect x="27" y="21" width="3390" height="1581" fill="#e0dfdf" />
      <path d="M1180 330L1500 320L1800 350L1800 700L2220 640L2230 1500L1400 1500L1230 1100L1160 700Z" fill="#eae4de" />
      <path d={CITY.houses} fill="#d3c8bf" />
      <path d={CITY.dark} fill="#bfb0a4" />
      <path d={CITY.lanes} stroke="#efeaea" strokeWidth="3" fill="none" />
      <path d={CITY.streets} stroke="#fdfdfd" strokeWidth="4.5" fill="none" strokeLinecap="round" />

      {Object.entries(AREAS).map(([tile, list]) => (
        <g key={tile} transform={`translate(${OFFSET[tile].join(" ")})`}>
          {list.map(([c, pts], i) => (
            <g key={i}>
              <polygon points={pts} fill={c} stroke={c} strokeWidth="4" strokeLinejoin="round" />
              {c === ALLOT && <polygon points={pts} fill="url(#trees)" />}
              {c === PINK && <polygon points={pts} fill="url(#hatch)" />}
            </g>
          ))}
        </g>
      ))}
      <Lines data={{ B: ["285,820 370,700 460,700 605,770 622,840"], E: ["262,0 250,70 275,180 300,260 330,370", "615,0 580,110 525,190 500,280 470,420", "300,225 400,215 490,220"] }} width={24} color={GRASS} />
      <path d={CITY.paths} stroke="#fa6b5c" strokeWidth="3" strokeDasharray="3 7" fill="none" />
      <path d={CITY.crumbs} stroke="#c8b8ae" strokeWidth="7" strokeDasharray="9 5" fill="none" opacity="0.4" />
      <Lines data={PATHS} width={3} color="#f6705f" dash="4 7" cap="butt" />

      <Lines data={WATER.wide} width={86} color={GRASS} opacity={0.9} />
      <Lines data={WATER.mid} width={30} color={GRASS} />
      <Lines data={WATER.wide} width={63} color="#aad3df" />
      <Lines data={WATER.mid} width={20} color="#9ccbd8" />
      <Lines data={WATER.slim} width={14} color="#9ccbd8" />
      <Lines data={WATER.thin} width={6} color="#9ccbd8" />
      <g transform="translate(2280 825)" fill="#aad3df">
        <polygon points="640,458 690,446 772,578 722,592" />
        <polygon points="655,300 672,300 665,430 610,450" />
      </g>
      <g transform="translate(2280 0)" fill="#aad3df">
        <path d="M765 722Q800 702 838 720L848 765Q830 790 790 802L735 812Z" />
        <path d="M1062 622L1130 616L1132 648L1080 640Z" />
        <circle cx="968" cy="603" r="33" fill="#d0bfb4" />
        <circle cx="992" cy="570" r="14" fill="#d0bfb4" />
        <path d="M903 32L945 25L952 48L1028 52L1030 205L965 190L925 160L880 132Z" fill="none" stroke="#8d6b78" strokeWidth="5" />
        <path d="M1137 515L1080 515L1060 560L1105 570L1120 595L1137 600" fill="none" stroke="#8d6b78" strokeWidth="5" />
      </g>
      <Lines data={TUNNEL} width={12} color="#8fb596" opacity={0.8} />

      <Lines data={LOCAL} width={8} color="#cfc9c6" />
      <Lines data={LOCAL} width={6} color="#ffffff" />
      <Lines data={WHITE} width={14} color="#c9c4c2" />
      <Lines data={WHITE} width={11.5} color="#ffffff" />
      <Lines data={WHITE_BIG} width={26} color="#bdb8b6" />
      <Lines data={WHITE_BIG} width={23} color="#ffffff" />
      <Lines data={YELLOW} width={20} color="#c9c991" />
      <Lines data={YELLOW} width={17} color="#f6f7b4" />
      <Lines data={ORANGE} width={21} color="#dbab68" />
      <Lines data={ORANGE} width={17.5} color="#fbd6a4" />
      <Lines data={ORANGE} width={1.6} color="#c58f45" />

      <Lines data={RAIL_WIDE} width={20} color="#6b6b6b" cap="butt" />
      <Lines data={RAIL_WIDE} width={9} color="#e8e8e8" dash="16 9" cap="butt" />
      <Lines data={RAIL_WIDE} width={5} color="#6b6b6b" cap="butt" />
      <Lines data={RAIL_THIN} width={3.5} color="#6b6b6b" cap="butt" />
      <Lines data={RAIL} width={9} color="#666666" cap="butt" />
      <Lines data={RAIL} width={2.6} color="#f2f2f2" dash="18 10" cap="butt" />
      <Lines data={WIRES} width={2} color="#8d8d8d" />
      <Lines data={TRAM} width={4.2} color="#5a5a5e" />
      <Lines data={BLUE_DOTS} width={3.6} color="#3030e0" dash="4 8" cap="butt" />
      <Lines data={NAVY_DASH} width={3} color="#7272c8" dash="16 12" cap="butt" />
      <Marks data={STOPS} size={9} fill="#4a5ea8" stroke="#5f6fb8" />
      <Marks data={NODES} size={7} fill="#d8d8d8" stroke="#555555" />
      <path d="M157 1219L168 1239H146Z M1501 1230L1512 1250H1490Z" fill="#d08030" />

      <Labels />
      <g>
        {HEAT.map(([k, x, y, rx, ry, rot], i) => (
          <ellipse key={i} cx={x} cy={y} rx={rx} ry={ry} fill={`url(#${k})`} transform={`rotate(${rot} ${x} ${y})`} />
        ))}
      </g>
    </svg>
  );
}

/* ------------------------------------------------------------------ */
/* Page                                                                */
/* ------------------------------------------------------------------ */

const ITEMS = [
  { name: "Chicken Pot Pie Crepe", category: "Main", price: "15.00", cost: "6.00", profit: "9.00", line: "0,3 83,1.5 253,12", base: 43 },
  { name: "Breakfast Crepe", category: "Main", price: "12.00", cost: "5.00", profit: "7.00", line: "0,3 83,2.5 253,15", base: 45 },
  { name: "Crepe Suzette", category: "Snack", price: "9.00", cost: "4.00", profit: "5.00", line: "0,3 83,4 253,14.5", base: 45 },
];

function ItemCard({ item }) {
  return (
    <article className="flex h-[164px] justify-between rounded-[7px] border border-[#d5d6d9] pt-[12.5px] pr-[30px] pl-[14px] text-[12.9px] leading-[23px]">
      <div className="flex flex-col gap-[14.6px]">
        <p className="font-medium text-[#1d1e2a]">{item.name}</p>
        <p>Item Category: {item.category}</p>
        <p className="font-medium text-[#1d1e2a]">Profit:</p>
        <p>$ {item.profit}</p>
      </div>
      <div className="flex w-[253px] flex-col">
        <div className="flex flex-col gap-[14.6px] pl-[82px]">
          <p className="whitespace-nowrap"><b className="font-medium text-[#1d1e2a]">Unit Price:</b> $ {item.price}</p>
          <p className="whitespace-nowrap"><b className="font-medium text-[#1d1e2a]">Production Cost:</b> $ {item.cost}</p>
        </div>
        <svg viewBox="0 0 253 46" className="mt-[19.5px] block h-[46px] w-[253px]">
          <polygon points={`${item.line} 253,${item.base} 0,${item.base}`} fill="#ffc0cb" />
          <polyline points={item.line} fill="none" stroke="#ff0000" strokeWidth="1.8" />
        </svg>
      </div>
    </article>
  );
}

function Pill({ label, active, width }) {
  return (
    <button className={`flex h-[29px] items-center justify-center rounded-full border text-[11.3px] ${width} ${active ? "border-[#ff4b4b] bg-[#ffeded] text-[#ff4b4b]" : "border-[#d5d6d9] bg-white"}`}>
      {label}
    </button>
  );
}

export default function App() {
  return (
    <div className="h-[941px] w-[1919px] overflow-hidden bg-white font-['Noto_Sans_CJK_SC','Noto_Sans',sans-serif] text-[#31333f]">
      <div className="h-px bg-linear-to-r from-[#ff4b4b] to-[#fffd80]" />
      <header className="flex h-[54px] items-start justify-end pt-[17px] pr-[24px]">
        <span className="text-[11.3px] leading-[24px]">Deploy</span>
        <MdMoreVert className="mt-[4px] ml-[16px] size-[18px]" />
      </header>

      <nav className="ml-[364px] flex h-[50px] w-[1188px] rounded-[7px] bg-[#f0f2f6] font-['Liberation_Sans',Arial,sans-serif] text-[14.4px] text-black">
        <a className="flex w-[410px] items-center justify-center">
          <BsHouseFill className="mr-[11px] size-[14px] text-[#31333f]" />
          Home
        </a>
        <a className="mr-[12px] flex w-[366px] items-center justify-center">
          <BsGraphUp className="mr-[12px] size-[14px]" />
          Sales Projections
        </a>
        <a className="mt-[11px] flex h-[29px] w-[389px] items-center justify-center rounded-[5px] border border-[#ff2b2b] bg-[#ff4b4b] pb-px font-['Inter'] text-[15px] font-black tracking-[0.4px] text-white">
          <BsGeoAlt className="mr-[12px] size-[14px]" />
          Truck Location Prediction
        </a>
      </nav>

      <main className="ml-[72px] w-[1771px]">
        <h1 className="pt-[39px] text-[35.4px] leading-[48px] font-bold">Discover Ideal Food Truck Hotspots in Poland</h1>
        <div className="mt-[14px] text-[12.9px] leading-[23px] whitespace-nowrap">
          <p>Explore prime locations for food truck success across Poland with data-driven insights. This map highlights hotspots by sales performance, customer demand, and menu preferences. Filter by menu type, like tacos or other popular items, to identify optimal areas to set up a food truck and</p>
          <p>maximize sales potential. Use the interactive map and filters to dive deeper into specific regions and menu types, helping you make informed decisions on where to expand or launch your food truck business.</p>
        </div>
        <hr className="mt-[44px] border-[#d5d6d9]" />

        <div className="flex">
          <section className="w-[1158px]">
            <div className="flex h-[105px] pt-[29px] text-[11.3px]">
              <div className="w-[293px]">
                <p className="leading-[20px]">Select a Menu Type for your Food Truck</p>
                <div className="mt-[5px] flex h-[36px] w-[279px] items-center justify-between rounded-[7px] bg-[#f0f2f6] pt-px pr-[13px] pl-[10px] text-[12.9px]">
                  Crepes
                  <svg viewBox="0 0 12 8" className="h-[8px] w-[12px]"><path d="M2 1.5L6 5.5L10 1.5" fill="none" stroke="#262730" strokeWidth="1.8" /></svg>
                </div>
              </div>
              <div className="w-[380px]">
                <p className="leading-[20px]">Select the options for your Food Truck</p>
                <div className="mt-[5px] flex gap-[3.7px]">
                  <Pill label="All" active width="w-[37px]" />
                  <Pill label="Main" width="w-[48px]" />
                  <Pill label="Snack" width="w-[56px]" />
                  <Pill label="Dessert" width="w-[63px]" />
                  <Pill label="Beverage" width="w-[72px]" />
                </div>
              </div>
              <div className="w-[294px]">
                <p className="leading-[20px]">Select a City for your Food Truck</p>
                <div className="mt-[5px] flex">
                  <button className="h-[29px] w-[70px] rounded-l-[7px] border border-[#ff4b4b] bg-[#ffeded] text-[#ff4b4b]">Krakow</button>
                  <button className="h-[29px] w-[71px] rounded-r-[7px] border border-l-0 border-[#d5d6d9]">Warsaw</button>
                </div>
              </div>
              <button className="mt-[15px] h-[36px] w-[117px] rounded-[7px] border border-[#d5d6d9] pb-[2px] text-[12.9px]">Apply Selection</button>
            </div>
            <div className="relative ml-[7px] h-[527px] w-[1130px] overflow-hidden">
              <CityMap />
              <div className="absolute top-[9px] left-[9px] flex h-[56px] w-[29px] flex-col rounded-[3px] border border-black/25 bg-white">
                <span className="flex h-[27px] items-center justify-center border-b border-[#cccccc]">
                  <svg viewBox="0 0 12 12" className="size-[12px]"><path d="M6 0.5V11.5M0.5 6H11.5" stroke="#000000" strokeWidth="2" /></svg>
                </span>
                <span className="flex h-[27px] items-center justify-center">
                  <svg viewBox="0 0 12 12" className="size-[12px]"><path d="M0.5 6H11.5" stroke="#000000" strokeWidth="2" /></svg>
                </span>
              </div>
            </div>
          </section>

          <aside className="w-[613px]">
            <h2 className="h-[105px] pt-[37px] pr-[37px] text-center text-[19.4px] leading-[30px] font-medium text-[#262730]">Top 3 Items with Seasonal Sales Insights</h2>
            <div className="flex flex-col gap-[14.6px]">
              {ITEMS.map((item) => (
                <ItemCard key={item.name} item={item} />
              ))}
            </div>
          </aside>
        </div>
      </main>
    </div>
  );
}
